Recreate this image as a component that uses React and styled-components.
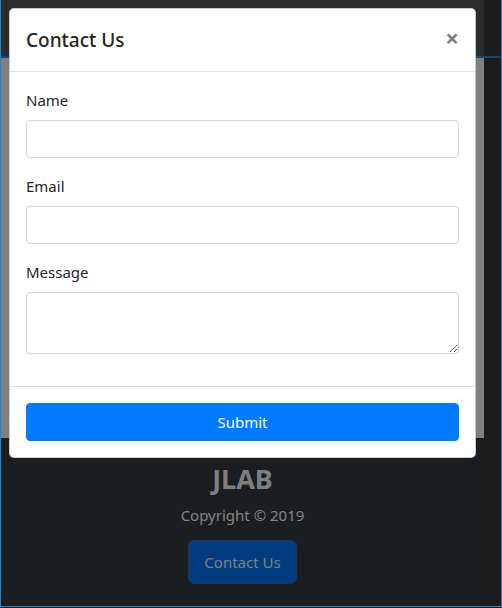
import React from "react";
import styled, { createGlobalStyle } from "styled-components";

const GlobalStyle = createGlobalStyle`
  *, *::before, *::after { box-sizing: border-box; }
  html, body { margin: 0; padding: 0; }
  body {
    background: #1b1e21;
    font-family: "Noto Sans", "Open Sans", sans-serif;
    color: #212529;
  }
`;

const Frame = styled.div`
  position: relative;
  width: 502px;
  height: 607px;
  display: flex;
  border-left: 1px solid #1a86e0;
  border-right: 1px solid #1a86e0;
  border-bottom: 1px solid #1a86e0;
  overflow: hidden;
`;

const Page = styled.div`
  flex: 1;
  display: flex;
  flex-direction: column;
`;

const Navbar = styled.div`
  height: 56px;
  background: #2b2c2c;
`;

const NavLine = styled.div`
  height: 2px;
  background: #0d4b73;
`;

const Hero = styled.div`
  height: 380px;
  background: #808080;
`;

const Footer = styled.footer`
  flex: 1;
  background: #1b1e21;
  display: flex;
  flex-direction: column;
  align-items: center;
  padding-top: 24px;
  color: #808080;
`;

const Brand = styled.h3`
  margin: 0 0 8px;
  font-size: 27px;
  line-height: 33px;
  font-weight: 700;
  color: #7f7f7f;
`;

const Copy = styled.p`
  margin: 0 0 16px;
  font-size: 15px;
  line-height: 24px;
  color: #858585;
`;

const FooterButton = styled.button`
  font-family: inherit;
  font-size: 15px;
  line-height: 24px;
  padding: 6px 12px;
  border-radius: 4px;
  background: #003d80;
  border: 1px solid #003d80;
  color: #808080;
  box-shadow: 0 0 0 3px #0f3c6c;
`;

const Scrollbar = styled.div`
  width: 17px;
  display: flex;
  flex-direction: column;
  background: #1c1c1c;
`;

const ScrollTop = styled.div`
  height: 56px;
  background: #1c1c1c;
`;

const Modal = styled.div`
  position: absolute;
  top: 8px;
  left: 8px;
  width: 467px;
  background: #fff;
  border: 1px solid rgba(0, 0, 0, 0.2);
  border-radius: 5px;
  display: flex;
  flex-direction: column;
`;

const ModalHeader = styled.div`
  display: flex;
  align-items: flex-start;
  justify-content: space-between;
  padding: 16px;
  border-bottom: 1px solid #dee2e6;
`;

const Title = styled.h5`
  margin: 0;
  font-size: 19px;
  line-height: 30px;
  font-weight: 500;
  color: #212529;
`;

const Close = styled.button`
  background: transparent;
  border: 0;
  padding: 17px 16px 15px;
  margin: -16px -16px -16px auto;
  font-family: inherit;
  font-size: 24px;
  font-weight: 700;
  line-height: 1;
  color: #000;
  opacity: 0.5;
`;

const ModalBody = styled.div`
  padding: 16px;
`;

const Group = styled.div`
  margin-bottom: 16px;
`;

const Label = styled.label`
  display: block;
  margin-bottom: 8px;
  font-size: 15px;
  line-height: 24px;
  color: #212529;
`;

const Input = styled.input`
  display: block;
  width: 100%;
  height: 38px;
  padding: 6px 12px;
  font-family: inherit;
  font-size: 16px;
  line-height: 24px;
  border: 1px solid #ced4da;
  border-radius: 4px;
  background: #fff;
`;

const TextArea = styled.textarea`
  display: block;
  width: 100%;
  height: 62px;
  padding: 6px 12px;
  font-family: inherit;
  font-size: 16px;
  line-height: 24px;
  border: 1px solid #ced4da;
  border-radius: 4px;
  background: #fff;
`;

const ModalFooter = styled.div`
  padding: 16px;
  border-top: 1px solid #dee2e6;
`;

const Submit = styled.button`
  display: block;
  width: 100%;
  padding: 6px 12px;
  font-family: inherit;
  font-size: 15px;
  line-height: 24px;
  color: #fff;
  background: #007bff;
  border: 1px solid #007bff;
  border-radius: 4px;
`;

export default function App() {
  return (
    <>
      <GlobalStyle />
      <Frame>
        <Page>
          <Navbar />
          <NavLine />
          <Hero />
          <Footer>
            <Brand>JLAB</Brand>
            <Copy>Copyright © 2019</Copy>
            <FooterButton>Contact Us</FooterButton>
          </Footer>
        </Page>
        <Scrollbar>
          <ScrollTop />
          <NavLine />
        </Scrollbar>
        <Modal>
          <ModalHeader>
            <Title>Contact Us</Title>
            <Close aria-label="Close">×</Close>
          </ModalHeader>
          <ModalBody>
            <Group>
              <Label>Name</Label>
              <Input type="text" />
            </Group>
            <Group>
              <Label>Email</Label>
              <Input type="email" />
            </Group>
            <Group>
              <Label>Message</Label>
              <TextArea rows={2} />
            </Group>
          </ModalBody>
          <ModalFooter>
            <Submit>Submit</Submit>
          </ModalFooter>
        </Modal>
      </Frame>
    </>
  );
}
